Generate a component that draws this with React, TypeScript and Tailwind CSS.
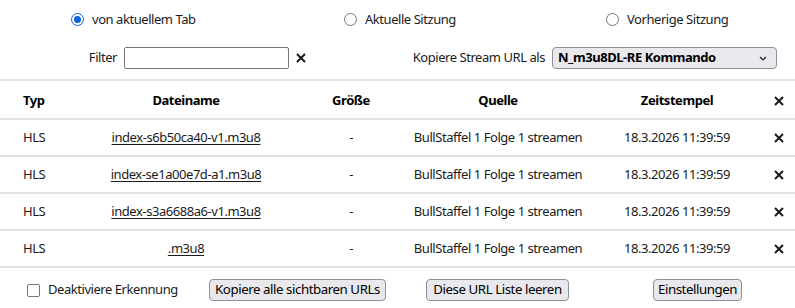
import { useState } from "react";

type Row = { typ: string; file: string; size: string; source: string; time: string };

const rows: Row[] = [
  { typ: "HLS", file: "index-s6b50ca40-v1.m3u8", size: "-", source: "BullStaffel 1 Folge 1 streamen", time: "18.3.2026 11:39:59" },
  { typ: "HLS", file: "index-se1a00e7d-a1.m3u8", size: "-", source: "BullStaffel 1 Folge 1 streamen", time: "18.3.2026 11:39:59" },
  { typ: "HLS", file: "index-s3a6688a6-v1.m3u8", size: "-", source: "BullStaffel 1 Folge 1 streamen", time: "18.3.2026 11:39:59" },
  { typ: "HLS", file: ".m3u8", size: "-", source: "BullStaffel 1 Folge 1 streamen", time: "18.3.2026 11:39:59" },
];

const cols = "grid grid-cols-[73px_226px_104px_190px_168px_34px] items-center";

function Cross() {
  return (
    <svg className="h-[10px] w-[10px]" viewBox="0 0 10 10" fill="none" aria-hidden>
      <path d="M1 1l8 8M9 1l-8 8" stroke="#1a1a1a" strokeWidth="2" />
    </svg>
  );
}

function Radio({ checked, label, onClick }: { checked: boolean; label: string; onClick: () => void }) {
  return (
    <button type="button" className="flex items-center gap-[8px]" onClick={onClick}>
      <span className={`flex h-[13px] w-[13px] items-center justify-center rounded-full border ${checked ? "border-[#0b63d6]" : "border-[#767676]"}`}>
        {checked && <span className="h-[7px] w-[7px] rounded-full bg-[#0b63d6]" />}
      </span>
      <span>{label}</span>
    </button>
  );
}

const btn = "flex h-[22px] items-center justify-center rounded-[4px] border border-[#8f8f9d] bg-[#e9e9ed] text-[13.3px] leading-none text-black";

export default function App() {
  const [source, setSource] = useState(0);
  const [filter, setFilter] = useState("");
  const [disabled, setDisabled] = useState(false);

  return (
    <div className="h-[308px] w-[795px] overflow-hidden bg-white text-[13px] tracking-[-0.45px] text-[#1b1b1b] [font-family:'Noto_Sans',sans-serif]">
      <div className="grid h-[39px] grid-cols-[273px_262px_1fr] items-center pl-[71px]">
        <Radio checked={source === 0} label="von aktuellem Tab" onClick={() => setSource(0)} />
        <Radio checked={source === 1} label="Aktuelle Sitzung" onClick={() => setSource(1)} />
        <Radio checked={source === 2} label="Vorherige Sitzung" onClick={() => setSource(2)} />
      </div>

      <div className="grid h-[40px] grid-cols-[117px_172px_126px_130px_1fr] items-start pt-[8px]">
        <span className="flex h-[22px] items-center justify-end">Filter</span>
        <span className="flex justify-end">
          <input value={filter} onChange={(e) => setFilter(e.target.value)} className="h-[22px] w-[165px] rounded-[2px] border border-[#767676] px-1 outline-none" />
        </span>
        <button type="button" className="ml-[7px] mt-[6px] self-start" onClick={() => setFilter("")} aria-label="Filter leeren">
          <Cross />
        </button>
        <span className="flex h-[22px] items-center justify-end whitespace-nowrap">Kopiere Stream URL als</span>
        <span className="flex pl-[7px]">
          <span className="flex h-[22px] w-[225px] items-center justify-between rounded-[4px] border border-[#8f8f9d] bg-[#e9e9ed] pl-[5px] pr-[9px] font-bold text-black">
            N_m3u8DL-RE Kommando
            <svg className="h-[5px] w-[8px]" viewBox="0 0 8 5" fill="none" aria-hidden>
              <path d="M1 1l3 3 3-3" stroke="#222" strokeWidth="1.2" />
            </svg>
          </span>
        </span>
      </div>

      <div className="border-t-2 border-[#e3e3e3]">
        <div className={`${cols} h-[39px] border-b-2 border-[#e3e3e3] pt-[2px] font-bold text-black`}>
          <span className="pl-[23px]">Typ</span>
          <span className="flex justify-center">Dateiname</span>
          <span className="flex justify-center">Größe</span>
          <span className="flex justify-center">Quelle</span>
          <span className="flex justify-center">Zeitstempel</span>
          <span className="flex justify-center pl-[1px]"><Cross /></span>
        </div>
        {rows.map((r, i) => (
          <div key={i} className={`${cols} h-[37px] border-b-2 border-[#e3e3e3]`}>
            <span className="pl-[23px]">{r.typ}</span>
            <span className="flex justify-center whitespace-nowrap"><a href="#" className="underline underline-offset-2">{r.file}</a></span>
            <span className="flex justify-center">{r.size}</span>
            <span className="flex justify-center whitespace-nowrap">{r.source}</span>
            <span className="flex justify-center whitespace-nowrap">{r.time}</span>
            <span className="flex justify-center pl-[1px]"><Cross /></span>
          </div>
        ))}
      </div>

      <div className="grid h-[42px] grid-cols-[209px_217px_227px_1fr] items-center pt-[2px]">
        <label className="flex items-center gap-[8px] pl-[27px]">
          <input type="checkbox" checked={disabled} onChange={(e) => setDisabled(e.target.checked)} className="m-0 h-[13px] w-[13px] appearance-none rounded-[2px] border border-[#767676] checked:bg-[#0b63d6]" />
          <span className="whitespace-nowrap">Deaktiviere Erkennung</span>
        </label>
        <button type="button" className={`${btn} w-[177px]`}>Kopiere alle sichtbaren URLs</button>
        <button type="button" className={`${btn} w-[143px]`}>Diese URL Liste leeren</button>
        <button type="button" className={`${btn} w-[89px]`}>Einstellungen</button>
      </div>
    </div>
  );
}
